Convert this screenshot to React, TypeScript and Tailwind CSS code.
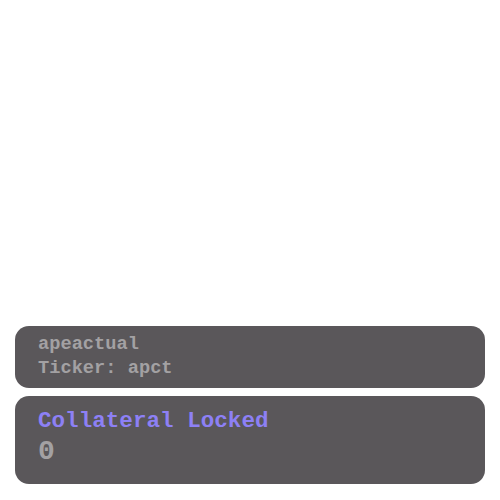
import React from "react";

export default function App() {
  return (
    <div
      className="flex h-[500px] w-[500px] flex-col justify-end gap-2 bg-white px-[15px] pb-4"
      style={{ fontFamily: '"Courier New", Courier, "Nimbus Mono PS", "Nimbus Mono L", FreeMono, "Liberation Mono", monospace' }}
    >
      <div className="flex flex-col rounded-[14px] bg-[#5a575a] px-[23px] pt-[6px] pb-[8px]">
        <div className="text-[18.7px] font-bold leading-[24px] text-[#a3a1a3]">apeactual</div>
        <div className="text-[18.7px] font-bold leading-[24px] text-[#a3a1a3]">Ticker: apct</div>
      </div>
      <div className="flex h-[88px] flex-col rounded-[14px] bg-[#5a575a] px-[23px] pt-[12px]">
        <div className="text-[22.6px] font-bold leading-[26px] text-[#8d80f5]">Collateral Locked</div>
        <div className="mt-[2px] text-[28px] font-bold leading-[32px] text-[#a3a1a3]">0</div>
      </div>
    </div>
  );
}
